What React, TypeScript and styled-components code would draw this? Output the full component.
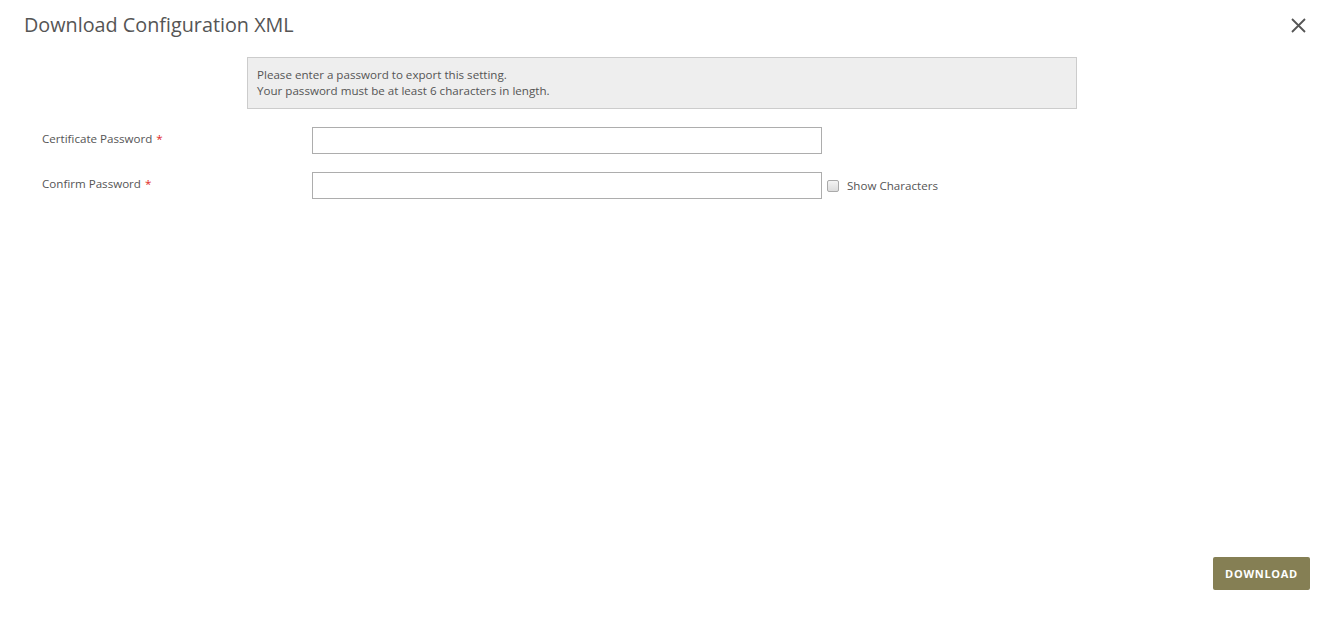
import { useState } from 'react';
import styled, { createGlobalStyle } from 'styled-components';

const GlobalStyle = createGlobalStyle`
  html, body {
    margin: 0;
    padding: 0;
    background: #fff;
    font-family: 'Open Sans', 'Liberation Sans', sans-serif;
  }
`;

const Modal = styled.div`
  display: flex;
  flex-direction: column;
  height: 644px;
  box-sizing: border-box;
  padding: 0 24px 54px 24px;
`;

const Header = styled.div`
  display: flex;
  align-items: center;
  justify-content: space-between;
  height: 50px;
`;

const Title = styled.h1`
  margin: 0;
  font-size: 19.8px;
  font-weight: 400;
  color: #555;
  line-height: 1;
  padding-bottom: 1px;
`;

const CloseButton = styled.button`
  display: flex;
  align-items: center;
  justify-content: center;
  width: 24px;
  height: 24px;
  padding: 0;
  margin-right: 0;
  border: none;
  background: none;
  cursor: pointer;
`;

const Notice = styled.div`
  width: 830px;
  box-sizing: border-box;
  margin: 7px 0 0 223px;
  padding: 9px 9px 9px;
  background: #eee;
  border: 1px solid #ccc;
  font-size: 11.6px;
  line-height: 16px;
  color: #555;
`;

const Form = styled.div`
  display: flex;
  flex-direction: column;
  gap: 18px;
  margin-top: 18px;
  padding-left: 18px;
`;

const Row = styled.div`
  display: flex;
  align-items: center;
`;

const Label = styled.label`
  width: 270px;
  font-size: 11.6px;
  color: #555;
  padding-bottom: 5px;
`;

const Required = styled.span`
  color: #e02b27;
  margin-left: 4px;
`;

const Input = styled.input`
  width: 510px;
  height: 27px;
  box-sizing: border-box;
  border: 1px solid #adadad;
  padding: 0 8px;
  font-family: inherit;
  font-size: 12px;
  outline: none;
`;

const CheckLabel = styled.label`
  display: flex;
  align-items: center;
  gap: 8px;
  margin-left: 5px;
  margin-top: 0;
  font-size: 11.6px;
  color: #555;
  cursor: pointer;
`;

const Checkbox = styled.input`
  appearance: none;
  width: 12px;
  height: 12px;
  margin: 1px 0 0;
  border: 1px solid #aaa;
  border-radius: 2px;
  background: linear-gradient(#f4f4f4, #dcdcdc);
  &:checked {
    background: #857f54;
  }
`;

const Footer = styled.div`
  display: flex;
  justify-content: flex-end;
  margin-top: auto;
`;

const PrimaryButton = styled.button`
  width: 97px;
  height: 33px;
  border: none;
  border-radius: 2px;
  background: #857f54;
  color: #fff;
  font-family: inherit;
  font-size: 11px;
  font-weight: 700;
  letter-spacing: 0.7px;
  text-transform: uppercase;
  cursor: pointer;
`;

export default function App() {
  const [show, setShow] = useState(false);
  const type = show ? 'text' : 'password';

  return (
    <>
      <GlobalStyle />
      <Modal>
        <Header>
          <Title>Download Configuration XML</Title>
          <CloseButton aria-label="Close">
            <svg width="15" height="15" viewBox="0 0 15 15">
              <path d="M1 1L14 14M14 1L1 14" stroke="#555" strokeWidth="1.8" />
            </svg>
          </CloseButton>
        </Header>
        <Notice>
          Please enter a password to export this setting.
          <br />
          Your password must be at least 6 characters in length.
        </Notice>
        <Form>
          <Row>
            <Label>
              Certificate Password<Required>*</Required>
            </Label>
            <Input type={type} />
          </Row>
          <Row>
            <Label>
              Confirm Password<Required>*</Required>
            </Label>
            <Input type={type} />
            <CheckLabel>
              <Checkbox
                type="checkbox"
                checked={show}
                onChange={(e) => setShow(e.target.checked)}
              />
              Show Characters
            </CheckLabel>
          </Row>
        </Form>
        <Footer>
          <PrimaryButton>Download</PrimaryButton>
        </Footer>
      </Modal>
    </>
  );
}
